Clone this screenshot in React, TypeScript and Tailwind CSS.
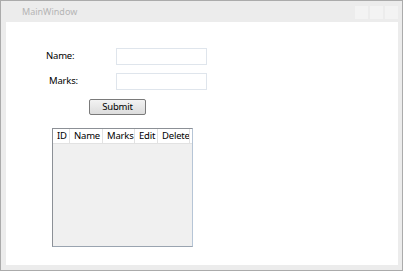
import React from 'react';

const columns = ['ID', 'Name', 'Marks', 'Edit', 'Delete'];
const colWidths = ['w-[17px]', 'w-[33px]', 'w-[32px]', 'w-[23px]', 'w-[32px]'];

const App: React.FC = () => {
  return (
    <div
      className="w-[403px] h-[271px] bg-[#ececec] border border-[#ababab] flex flex-col"
      style={{ fontFamily: '"Noto Sans", "Open Sans", sans-serif' }}
    >
      {/* title bar */}
      <div className="h-[21px] flex items-center pl-[21px] pr-[4px]">
        <span className="text-[9px] text-[#b4b4b4] leading-none">MainWindow</span>
        <div className="ml-auto flex gap-[2px] self-start mt-[5px]">
          <div className="w-[13px] h-[13px] bg-[#f3f3f3]" />
          <div className="w-[13px] h-[13px] bg-[#f3f3f3]" />
          <div className="w-[13px] h-[13px] bg-[#f3f3f3]" />
        </div>
      </div>

      {/* client area */}
      <div className="flex-1 ml-[5px] mr-[4px] mb-[5px] bg-white flex flex-col pt-[26px] text-[9.5px] tracking-[-0.2px] text-black">
        <div className="flex items-center h-[17px]">
          <label className="w-[110px] pl-[40px]">Name:</label>
          <input className="w-[91px] h-[17px] border border-[#dfe5ec] outline-none" />
        </div>
        <div className="flex items-center h-[17px] mt-[8px]">
          <label className="w-[110px] pl-[43px]">Marks:</label>
          <input className="w-[91px] h-[17px] border border-[#dfe5ec] outline-none" />
        </div>
        <div className="mt-[9px] pl-[83px]">
          <button className="w-[57px] h-[16px] border border-[#7a7a7a] rounded-[2px] bg-gradient-to-b from-[#f3f3f3] to-[#dcdcdc] flex items-center justify-center leading-none">
            Submit
          </button>
        </div>

        {/* grid */}
        <div className="mt-[13px] ml-[46px] w-[141px] h-[119px] bg-[#f0f0f0] border border-[#8c9096] border-r-[#b6c5d6] border-b-[#9aa4b0] flex flex-col">
          <div className="flex h-[15px] bg-white border-b border-[#e2e2e2]">
            {columns.map((c, i) => (
              <div
                key={c}
                className={`${colWidths[i]} shrink-0 h-full flex items-center pl-[4px] border-r border-[#e2e2e2] leading-none overflow-hidden whitespace-nowrap`}
              >
                {c}
              </div>
            ))}
          </div>
        </div>
      </div>
    </div>
  );
};

export default App;
